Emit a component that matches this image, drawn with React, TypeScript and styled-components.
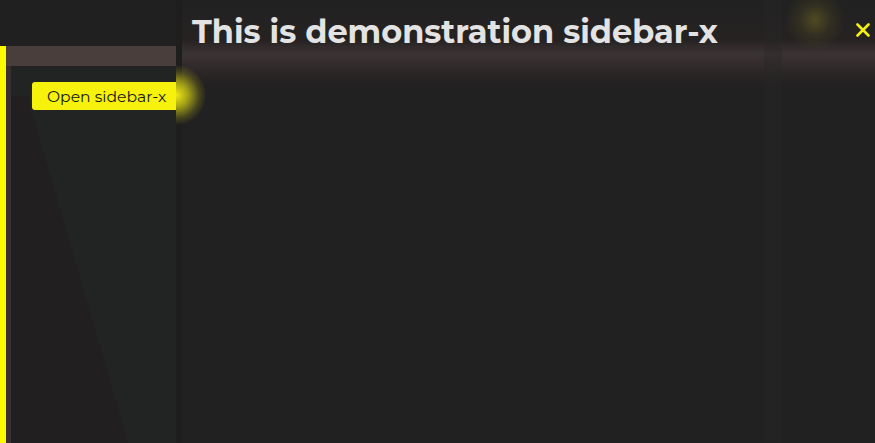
import React from "react";
import styled, { createGlobalStyle } from "styled-components";

const Global = createGlobalStyle`
  html, body { margin: 0; padding: 0; background: #202020; overflow: hidden; }
  body { font-family: "Montserrat", "Inter", "Open Sans", sans-serif; }
  #root { height: 443px; }
`;

const Page = styled.div`
  position: relative;
  width: 875px;
  height: 443px;
  padding-top: 46px;
  box-sizing: border-box;
  display: flex;
  flex-direction: column;
`;

const Frame = styled.div`
  flex: 1;
  display: flex;
  flex-direction: column;
  border-left: 6px solid #fcf900;
`;

const TopStrip = styled.div`
  height: 20px;
  background: #4a3e3d;
`;

const Body = styled.div`
  flex: 1;
  display: flex;
  border-left: 5px solid #3a302f;
`;

const Panel = styled.div`
  position: relative;
  flex: 1;
  background: #222423;
  border-top-left-radius: 4px;
  padding: 16px 0 0 21px;
  overflow: hidden;
  &::before {
    content: "";
    position: absolute;
    inset: 0;
    background: #211f20;
    clip-path: polygon(0 30px, 16px 30px, 117px 100%, 0 100%);
  }
`;

const OpenButton = styled.button`
  position: relative;
  z-index: 1;
  height: 28px;
  width: 160px;
  background: #f6f20c;
  border: none;
  border-radius: 3px;
  padding: 0 0 0 15px;
  text-align: left;
  font-family: "Montserrat", "Inter", sans-serif;
  font-size: 15.6px;
  color: #161616;
  cursor: pointer;
`;

const Sidebar = styled.aside`
  position: absolute;
  z-index: 5;
  top: 0;
  left: 176px;
  right: 0;
  bottom: 0;
  overflow: hidden;
  background:
    radial-gradient(circle at 639px 20px, rgba(150, 140, 40, 0.38) 0, rgba(110, 105, 30, 0.18) 16px, rgba(0,0,0,0) 30px),
    linear-gradient(to right, #1e1e1e 0, #1e1e1e 6px, rgba(0,0,0,0) 6px),
    linear-gradient(to right, rgba(0,0,0,0) 588px, rgba(38,38,38,0.35) 588px, rgba(38,38,38,0.35) 606px, rgba(0,0,0,0) 606px),
    linear-gradient(to bottom, #212121 0, #262222 40px, #3c3434 54px, #322b2b 66px, #252222 80px, #212121 90px),
    #212121;
  display: flex;
  flex-direction: column;
`;

const Glow = styled.div`
  position: absolute;
  left: -30px;
  top: 65px;
  width: 60px;
  height: 60px;
  border-radius: 50%;
  background: radial-gradient(circle, rgba(250, 245, 20, 0.95) 0, rgba(235, 230, 20, 0.65) 28%, rgba(180, 175, 20, 0.25) 55%, rgba(0,0,0,0) 72%);
  pointer-events: none;
`;

const Header = styled.header`
  display: flex;
  align-items: flex-start;
  justify-content: space-between;
  padding: 10px 5px 0 16px;
`;

const Title = styled.h1`
  margin: 0;
  font-family: "Montserrat", "Inter", sans-serif;
  font-weight: 700;
  font-size: 32px;
  line-height: 44px;
  letter-spacing: 0;
  color: #e4e3e3;
`;

const Close = styled.button`
  margin-top: 13px;
  background: none;
  border: none;
  padding: 0;
  width: 14px;
  height: 14px;
  display: flex;
  cursor: pointer;
`;

export default function App() {
  return (
    <>
      <Global />
      <Page>
        <Frame>
          <TopStrip />
          <Body>
            <Panel>
              <OpenButton>Open sidebar-x</OpenButton>
            </Panel>
          </Body>
        </Frame>
        <Sidebar>
          <Glow />
          <Header>
            <Title>This is demonstration sidebar-x</Title>
            <Close aria-label="Close">
              <svg width="14" height="14" viewBox="0 0 14 14">
                <path d="M1.5 1.5 L12.5 12.5 M12.5 1.5 L1.5 12.5" stroke="#f4ef14" strokeWidth="2.6" strokeLinecap="round" />
              </svg>
            </Close>
          </Header>
        </Sidebar>
      </Page>
    </>
  );
}
